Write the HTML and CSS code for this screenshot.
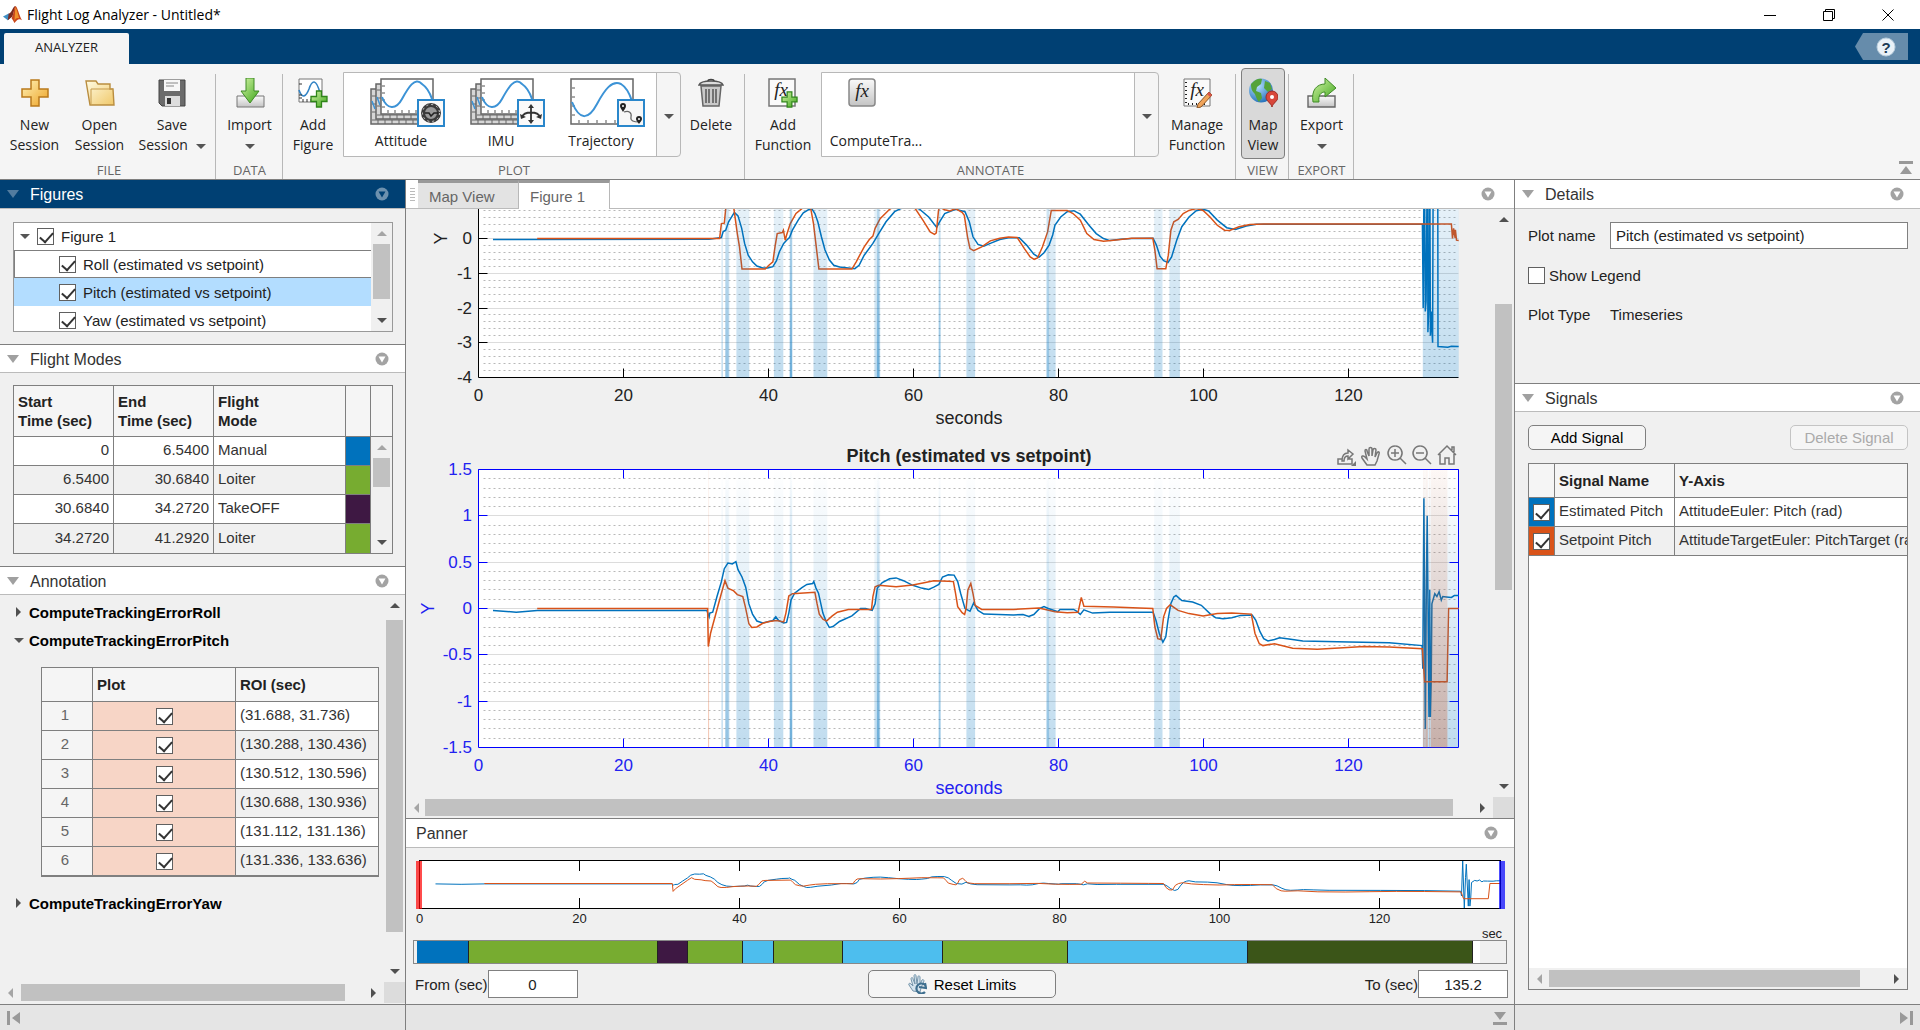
FILE: index.html
```html
<!DOCTYPE html>
<html lang="en">
<head>
    <meta charset="UTF-8">
    <meta name="viewport" content="width=device-width, initial-scale=1.0">
    <title>Flight Log Analyzer - Untitled*</title>
    <link rel="stylesheet" href="styles.css">
</head>
<body>
    <svg class="defs" width="0" height="0" aria-hidden="true">
        <defs>
            <linearGradient id="gold" x1="0" y1="0" x2="1" y2="1"><stop offset="0" stop-color="#fff3b8"/><stop offset="1" stop-color="#eda224"/></linearGradient>
            <linearGradient id="folder" x1="0" y1="0" x2="1" y2="1"><stop offset="0" stop-color="#fffbe2"/><stop offset="1" stop-color="#f0c869"/></linearGradient>
            <linearGradient id="green" x1="0" y1="0" x2="1" y2="1"><stop offset="0" stop-color="#d6f5a8"/><stop offset="1" stop-color="#3ca51a"/></linearGradient>
            <linearGradient id="steel" x1="0" y1="0" x2="0" y2="1"><stop offset="0" stop-color="#fafafa"/><stop offset="1" stop-color="#c4c4c4"/></linearGradient>
            <linearGradient id="blueBand" x1="0" y1="0" x2="0" y2="1"><stop offset="0" stop-color="#0072bd" stop-opacity="0"/><stop offset="1" stop-color="#0072bd" stop-opacity="0.25"/></linearGradient>
            <linearGradient id="redBand" x1="0" y1="0" x2="0" y2="1"><stop offset="0" stop-color="#d95319" stop-opacity="0.04"/><stop offset="1" stop-color="#d95319" stop-opacity="0.32"/></linearGradient>
            <radialGradient id="globe" cx="0.35" cy="0.3" r="0.8"><stop offset="0" stop-color="#b9e2ff"/><stop offset="1" stop-color="#1667b5"/></radialGradient>
            <symbol id="menu" viewBox="0 0 14 14"><circle cx="7" cy="7" r="6.500" fill="currentColor"/><path d="M3.500 4.500h7L7 10.500z"/></symbol>
            <symbol id="plus" viewBox="0 0 18 18"><path d="M6.500 1h5v5.500h5.500v5h-5.500v5.500h-5v-5.500H1v-5h5.500z" fill="url(#green)" stroke="#2f8519" stroke-width="1.300"/></symbol>
            <symbol id="stack" viewBox="0 0 75 49">
                <g fill="#d6d6d6" stroke="#666" stroke-width="1.500"><path d="M1 11h50v35H1z"/><path d="M6 6h50v35H6z"/></g>
                <path d="M2 42h48M7 37h48M8 42v4M15 42v4M22 42v4M29 42v4M36 42v4M43 42v4M13 37v4M20 37v4M27 37v4M34 37v4M41 37v4M2 18h4M2 26h4M2 34h4M7 12h4M7 20h4M7 28h4" stroke="#666" fill="none"/>
                <path d="M2 23l3 8M7 19l3 8" stroke="#3c93d6" stroke-width="1.500"/>
                <path d="M11 1h52v35H11z" fill="#fff" stroke="#666" stroke-width="1.500"/>
                <path d="M18 35v-3M25 35v-3M32 35v-3M39 35v-3M46 35v-3M12 8h3M12 15h3M12 22h3M12 29h3" stroke="#555"/>
                <path d="M12 19c5 13 14 13 20 2s13-23 20-15c6 4 8 9 10 15" fill="none" stroke="#3c93d6" stroke-width="2"/>
            </symbol>
        </defs>
    </svg>

    <header class="titlebar">
        <svg class="logo" viewBox="0 0 20 20"><path d="M0 12l6-3 3 3-4 4z" fill="#3f8fc4"/><path d="M6 9c3 0 4-7 7-8l-3 11-5 4z" fill="#7a2a20"/><path d="M13 1c2 0 4 10 7 15-3-2-5-1-8 3-1-2-2-4-3-5 2-3 2-10 4-13z" fill="#c9461b"/><path d="M13 2c2 3 3 9 4 12-2-1-4 0-5 3z" fill="#f0902b"/></svg>
        <h1>Flight Log Analyzer - Untitled*</h1>
        <div class="window-buttons">
            <button aria-label="Minimize"><svg viewBox="0 0 12 12"><path d="M0 6.500h12"/></svg></button>
            <button aria-label="Restore"><svg viewBox="0 0 12 12"><path d="M.5 2.500h9v9h-9zM2.500 2.500v-2h9v9h-2"/></svg></button>
            <button aria-label="Close"><svg viewBox="0 0 12 12"><path d="M.5.5l11 11M11.500.5l-11 11"/></svg></button>
        </div>
    </header>

    <nav class="tabbar">
        <a href="#" class="ribbon-tab">ANALYZER</a>
        <button class="help" aria-label="Help"><svg viewBox="0 0 20 20"><circle cx="10" cy="10" r="9" fill="#e9f1f7" stroke="#b8cddc"/><text x="10" y="15.500" text-anchor="middle">?</text></svg></button>
    </nav>

    <div class="ribbon">
        <section class="group group-file">
            <div class="tools">
                <button class="tool">
                    <svg viewBox="0 0 30 30"><path d="M11 2h8v9h9v8h-9v9h-8v-9H2v-8h9z" fill="url(#gold)" stroke="#b9791b" stroke-width="1.500"/></svg>
                    <span>New</span><span>Session</span>
                </button>
                <button class="tool">
                    <svg viewBox="0 0 30 30"><path d="M1 3h10l2 3h12v5h3l1 16H5z" fill="url(#folder)" stroke="#b98d3f" stroke-width="1.400"/><path d="M6 26V11h22" fill="none" stroke="#c69b4c"/></svg>
                    <span>Open</span><span>Session</span>
                </button>
                <button class="tool tool-wide">
                    <svg viewBox="0 0 30 30"><path d="M2 2h26v26H5l-3-3z" fill="#6b6b6b" stroke="#444"/><path d="M7 2h16v11H7z" fill="#f7f7f7"/><path d="M9 5h12M9 8h8" stroke="#888"/><path d="M8 18h15v10H8z" fill="#ddd"/><path d="M10 20h4v6h-4z" fill="#333"/></svg>
                    <span>Save</span><span>Session <i class="caret"></i></span>
                </button>
            </div>
            <h2>FILE</h2>
        </section>
        <section class="group group-data">
            <div class="tools">
                <button class="tool">
                    <svg viewBox="0 0 30 30"><path d="M2 18h27v11H2z" fill="url(#steel)" stroke="#777"/><path d="M11 0h8v13h5l-9 12-9-12h5z" fill="url(#green)" stroke="#3f8a26"/></svg>
                    <span>Import</span><span><i class="caret"></i></span>
                </button>
            </div>
            <h2>DATA</h2>
        </section>
        <section class="group group-plot">
            <div class="tools">
                <button class="tool">
                    <svg viewBox="0 0 30 30"><path d="M1 1h23v23H1z" fill="#fff" stroke="#777"/><path d="M1 12c3 9 7 7 10-1 3-9 7-11 11 4" fill="none" stroke="#3283c4" stroke-width="1.600"/><path d="M5 24v-3M9 24v-3M13 24v-3M1 6h3M1 17h3M1 20h3" stroke="#333"/><use href="#plus" x="12" y="12" width="18" height="18"/></svg>
                    <span>Add</span><span>Figure</span>
                </button>
                <div class="gallery">
                    <div class="gallery-items">
                        <button class="gallery-item">
                            <svg viewBox="0 0 75 49"><use href="#stack" width="75" height="49"/><path d="M48 22h26v26H48z" fill="#fafafa" stroke="#2a87cb" stroke-width="2"/><circle cx="61" cy="35" r="8" fill="#999" stroke="#3a3a3a" stroke-width="4"/><circle cx="61" cy="35" r="8.500" fill="none" stroke="#ccc" stroke-dasharray="2 3"/><path d="M55 35h4l2 3 3-3h4" fill="none" stroke="#222" stroke-width="1.500"/></svg>
                            <span>Attitude</span>
                        </button>
                        <button class="gallery-item">
                            <svg viewBox="0 0 75 49"><use href="#stack" width="75" height="49"/><path d="M48 22h26v26H48z" fill="#fafafa" stroke="#2a87cb" stroke-width="2"/><path d="M61 29v14M52 39c2-6 16-6 18 0" fill="none" stroke="#333" stroke-width="1.800"/><path d="M58 30l3-4 3 4zM58 42l3 4 3-4zM50 36l1 5 5-2zM72 36l-1 5-5-2z" fill="#333"/></svg>
                            <span>IMU</span>
                        </button>
                        <button class="gallery-item">
                            <svg viewBox="0 0 75 49"><path d="M1 1h62v45H1z" fill="#fff" stroke="#666" stroke-width="1.500"/><path d="M9 45v-3M18 45v-3M27 45v-3M36 45v-3M45 45v-3M2 10h3M2 19h3M2 28h3M2 37h3" stroke="#555"/><path d="M2 24c8 20 17 17 25 2S42 2 51 6c5 3 8 8 11 17" fill="none" stroke="#3c93d6" stroke-width="2"/><path d="M48 22h26v26H48z" fill="#f7f7f7" stroke="#2a87cb" stroke-width="2"/><path d="M54 34c5-2 8 1 7 5s3 5 8 5" fill="none" stroke="#666" stroke-width="1.200"/><path d="M53 34c-1-2-3-4-3-6a3 3 0 0 1 6 0c0 2-2 4-3 6zM69 46c-1-2-3-3-3-5a3 3 0 0 1 6 0c0 2-2 3-3 5z" fill="#222"/><circle cx="53" cy="28" r="1" fill="#fff"/><circle cx="69" cy="41" r="1" fill="#fff"/></svg>
                            <span>Trajectory</span>
                        </button>
                    </div>
                    <button class="gallery-more" aria-label="More plots"><i class="caret"></i></button>
                </div>
                <button class="tool">
                    <svg viewBox="0 0 30 30"><path d="M5 8h20l-2 20H7z" fill="#c9c9c9" stroke="#666" stroke-width="1.500"/><path d="M10 11v14M13 11v14M17 11v14M20 11v14" stroke="#555" stroke-width="1.500"/><path d="M3 7c1-3 6-4 12-4s11 1 12 4z" fill="#ddd" stroke="#555" stroke-width="1.500"/><path d="M12 3c0-2 6-2 6 0" fill="none" stroke="#444" stroke-width="1.500"/></svg>
                    <span>Delete</span>
                </button>
            </div>
            <h2>PLOT</h2>
        </section>
        <section class="group group-annotate">
            <div class="tools">
                <button class="tool tool-function">
                    <svg viewBox="0 0 30 30"><path d="M1 1h26v27H1z" fill="#fafafa" stroke="#777" stroke-width="1.500"/><text class="fx" x="13" y="18" text-anchor="middle">fx</text><use href="#plus" x="13" y="13" width="17" height="17"/></svg>
                    <span>Add</span><span>Function</span>
                </button>
                <div class="gallery">
                    <div class="gallery-items">
                        <button class="gallery-item gallery-function">
                            <svg viewBox="0 0 28 30"><rect x="1" y="1" width="26" height="27" rx="3" fill="url(#steel)" stroke="#888" stroke-width="1.500"/><text class="fx" x="14" y="19" text-anchor="middle">fx</text></svg>
                            <span>ComputeTra...</span>
                        </button>
                    </div>
                    <button class="gallery-more" aria-label="More functions"><i class="caret"></i></button>
                </div>
                <button class="tool tool-function">
                    <svg viewBox="0 0 30 30"><path d="M2 1h26v27H2z" fill="#fafafa" stroke="#777"/><path d="M4 4v22h22" fill="none" stroke="#222" stroke-width="2" stroke-dasharray="1 3"/><text class="fx" x="15" y="18" text-anchor="middle">fx</text><path d="M27 14l3 3-11 12-4 1 1-4z" fill="#f0a45a" stroke="#8a5526"/><path d="M27 14l3 3-2 2-3-3z" fill="#d9534a"/></svg>
                    <span>Manage</span><span>Function</span>
                </button>
            </div>
            <h2>ANNOTATE</h2>
        </section>
        <section class="group group-view">
            <div class="tools">
                <button class="tool tool-pressed" aria-pressed="true">
                    <svg viewBox="0 0 30 30"><circle cx="13" cy="12.500" r="12" fill="url(#globe)"/><path d="M3 6c4-5 8-6 11-5l-1 5-4 3-1 4 5 2 1 5-3 4c-3-3-3-7-5-9S3 11 3 6zM17 3l5 2 2 6-4 3-4-4z" fill="#54a33a"/><path d="M24 29c-1-4-6-6-6-10a6 6 0 0 1 12 0c0 4-5 6-6 10z" fill="#d8473b" stroke="#9c2a22"/><circle cx="24" cy="19" r="2" fill="#fff"/></svg>
                    <span>Map</span><span>View</span>
                </button>
            </div>
            <h2>VIEW</h2>
        </section>
        <section class="group group-export">
            <div class="tools">
                <button class="tool">
                    <svg viewBox="0 0 30 30"><path d="M1 18h27v11H1z" fill="url(#steel)" stroke="#666" stroke-width="1.400"/><path d="M6 24C4 12 10 6 18 6V0l11 10-11 9v-5c-4 0-7 3-6 10z" fill="url(#green)" stroke="#3f8a26"/></svg>
                    <span>Export</span><span><i class="caret"></i></span>
                </button>
            </div>
            <h2>EXPORT</h2>
        </section>
        <button class="collapse" aria-label="Collapse toolstrip"><svg viewBox="0 0 14 14"><path d="M0 0h14v3H0zM7 5l6 8H1z"/></svg></button>
    </div>

    <main class="workspace">
        <aside class="column">
            <section class="panel panel-figures">
                <div class="panel-head active"><i class="fold"></i><h3>Figures</h3><svg class="menu"><use href="#menu"/></svg></div>
                <div class="panel-body">
                    <div class="tree-box">
                        <ul class="tree">
                            <li class="root"><i class="caret"></i><label><input type="checkbox" checked>Figure 1</label></li>
                            <li class="outlined"><label><input type="checkbox" checked>Roll (estimated vs setpoint)</label></li>
                            <li class="selected"><label><input type="checkbox" checked>Pitch (estimated vs setpoint)</label></li>
                            <li><label><input type="checkbox" checked>Yaw (estimated vs setpoint)</label></li>
                        </ul>
                        <div class="vbar tree-bar"><i class="up off"></i><div class="thumb"></div><i class="down"></i></div>
                    </div>
                </div>
            </section>

            <section class="panel panel-modes">
                <div class="panel-head"><i class="fold"></i><h3>Flight Modes</h3><svg class="menu"><use href="#menu"/></svg></div>
                <div class="panel-body">
                    <div class="modes-box">
                        <table class="modes">
                            <thead><tr><th>Start<br>Time (sec)</th><th>End<br>Time (sec)</th><th>Flight<br>Mode</th><th class="swatch"></th></tr></thead>
                            <tbody>
                                <tr><td class="num">0</td><td class="num">6.5400</td><td>Manual</td><td class="manual"></td></tr>
                                <tr><td class="num">6.5400</td><td class="num">30.6840</td><td>Loiter</td><td class="loiter"></td></tr>
                                <tr><td class="num">30.6840</td><td class="num">34.2720</td><td>TakeOFF</td><td class="takeoff"></td></tr>
                                <tr><td class="num">34.2720</td><td class="num">41.2920</td><td>Loiter</td><td class="loiter"></td></tr>
                            </tbody>
                        </table>
                        <div class="modes-side">
                            <div class="vbar modes-bar"><i class="up off"></i><div class="thumb"></div><i class="down"></i></div>
                        </div>
                    </div>
                </div>
            </section>

            <section class="panel panel-annotation">
                <div class="panel-head"><i class="fold"></i><h3>Annotation</h3><svg class="menu"><use href="#menu"/></svg></div>
                <div class="annotation-body">
                    <div class="annotation-list">
                        <h4><i class="arrow-right"></i>ComputeTrackingErrorRoll</h4>
                        <h4><i class="caret"></i>ComputeTrackingErrorPitch</h4>
                        <table class="roi">
                            <thead><tr><th class="index"></th><th>Plot</th><th>ROI (sec)</th></tr></thead>
                            <tbody>
                                <tr><td class="index">1</td><td class="flag"><input type="checkbox" aria-label="Plot ROI 1" checked></td><td>(31.688, 31.736)</td></tr>
                                <tr><td class="index">2</td><td class="flag"><input type="checkbox" aria-label="Plot ROI 2" checked></td><td>(130.288, 130.436)</td></tr>
                                <tr><td class="index">3</td><td class="flag"><input type="checkbox" aria-label="Plot ROI 3" checked></td><td>(130.512, 130.596)</td></tr>
                                <tr><td class="index">4</td><td class="flag"><input type="checkbox" aria-label="Plot ROI 4" checked></td><td>(130.688, 130.936)</td></tr>
                                <tr><td class="index">5</td><td class="flag"><input type="checkbox" aria-label="Plot ROI 5" checked></td><td>(131.112, 131.136)</td></tr>
                                <tr><td class="index">6</td><td class="flag"><input type="checkbox" aria-label="Plot ROI 6" checked></td><td>(131.336, 133.636)</td></tr>
                            </tbody>
                        </table>
                        <h4><i class="arrow-right"></i>ComputeTrackingErrorYaw</h4>
                    </div>
                    <div class="vbar annotation-bar"><i class="up"></i><div class="thumb"></div><i class="down"></i></div>
                    <div class="hbar annotation-hbar"><i class="left off"></i><div class="thumb"></div><i class="right"></i></div>
                    <div class="corner"></div>
                </div>
            </section>
            <footer class="status"><svg viewBox="0 0 14 14"><path d="M0 0h3v14H0zM13 1v12L5 7z"/></svg></footer>
        </aside>

        <section class="column">
            <div class="doc-tabs">
                <i class="grip"></i>
                <a href="#">Map View</a>
                <a href="#" class="current">Figure 1</a>
                <svg class="menu"><use href="#menu"/></svg>
            </div>
            <div class="figure-area">
                <div class="figure-canvas">
                    <svg id="figure" viewBox="0 0 1087 588" preserveAspectRatio="xMidYMin meet"></svg>
                </div>
                <div class="vbar figure-bar"><i class="up"></i><div class="thumb"></div><i class="down"></i></div>
                <div class="hbar figure-hbar"><i class="left off"></i><div class="thumb"></div><i class="right"></i></div>
                <div class="corner"></div>
            </div>
            <div class="panel-head panner-head"><h3>Panner</h3><svg class="menu"><use href="#menu"/></svg></div>
            <div class="panner-body">
                <svg id="panner" viewBox="0 0 1108 92"></svg>
                <div class="mode-strip">
                    <i class="manual" style="flex-grow:51"></i><i class="loiter" style="flex-grow:190"></i><i class="takeoff" style="flex-grow:29"></i><i class="loiter" style="flex-grow:55"></i><i class="hold" style="flex-grow:30"></i><i class="loiter" style="flex-grow:69"></i><i class="hold" style="flex-grow:100"></i><i class="loiter" style="flex-grow:125"></i><i class="hold" style="flex-grow:181"></i><i class="mission" style="flex-grow:226"></i><i class="rest" style="flex-grow:7"></i><i class="outside" style="flex-grow:26"></i>
                </div>
                <div class="limits">
                    <div class="limit"><label for="from">From (sec)</label><input type="text" id="from" value="0"></div>
                    <button class="reset">
                        <svg viewBox="0 0 20 20"><path d="M6 17L2 11c-1-2 1-2 2-1l2 2-2-7c0-2 2-2 2 0l2 5-1-8c0-2 2-2 2 0l1 8 1-7c0-2 2-1 2 0v7l2-4c1-1 2 0 2 1l-3 7-1 4z" fill="#d5e4ee" stroke="#7494aa"/><path d="M18 11a5 5 0 1 0 0 7M12 13l7 1-1-5" fill="none" stroke="#3f6f8f" stroke-width="2.200"/></svg>
                        Reset Limits
                    </button>
                    <div class="limit"><label for="to">To (sec)</label><input type="text" id="to" value="135.2"></div>
                </div>
            </div>
            <footer class="status status-end"><svg viewBox="0 0 14 14"><path d="M0 11h14v3H0zM1 1h12L7 9z"/></svg></footer>
        </section>

        <aside class="column">
            <section class="panel panel-details">
                <div class="panel-head"><i class="fold"></i><h3>Details</h3><svg class="menu"><use href="#menu"/></svg></div>
                <div class="panel-body details">
                    <label for="plot-name">Plot name</label><input type="text" id="plot-name" value="Pitch (estimated vs setpoint)">
                    <label class="legend"><input type="checkbox">Show Legend</label>
                    <span>Plot Type</span><span>Timeseries</span>
                </div>
            </section>
            <section class="panel panel-signals">
                <div class="panel-head"><i class="fold"></i><h3>Signals</h3><svg class="menu"><use href="#menu"/></svg></div>
                <div class="panel-body signals-body">
                    <div class="signal-buttons"><button>Add Signal</button><button disabled>Delete Signal</button></div>
                    <div class="signals-box">
                        <table class="signals">
                            <thead><tr><th class="pick"></th><th class="name">Signal Name</th><th>Y-Axis</th></tr></thead>
                            <tbody>
                                <tr><td class="pick estimated-color"><input type="checkbox" aria-label="Estimated Pitch" checked></td><td>Estimated Pitch</td><td>AttitudeEuler: Pitch (rad)</td></tr>
                                <tr><td class="pick setpoint-color"><input type="checkbox" aria-label="Setpoint Pitch" checked></td><td>Setpoint Pitch</td><td>AttitudeTargetEuler: PitchTarget (rad)</td></tr>
                            </tbody>
                        </table>
                        <div class="hbar signals-hbar"><i class="left off"></i><div class="thumb"></div><i class="right"></i></div>
                    </div>
                </div>
            </section>
            <footer class="status status-end"><svg viewBox="0 0 14 14"><path d="M11 0h3v14h-3zM1 1v12l8-6z"/></svg></footer>
        </aside>
    </main>
    <script src="plots.js"></script>
</body>
</html>
```
FILE: plots.js
```js
// time (sec), value (rad)
const rollEstimated = [2,-.03, 31.8,-.02, 33.5,.03, 33.75,.2, 34.1,.24, 34.5,.48, 35.3,.75, 35.8,.65, 36.3,.29, 36.7,-.14, 37.2,-.48, 37.8,-.67, 38.4,-.79, 39.2,-.85, 39.9,-.85, 40.6,-.81, 41.1,-.64, 41.5,-.38, 42.1,-.14, 42.5,-.05, 42.9,.03, 43.3,.24, 44.1,.53, 44.8,.74, 45.6,.84, 46,.85, 46.4,.72, 46.8,.48, 47.3,.05, 47.8,-.33, 48.4,-.62, 49,-.77, 49.8,-.82, 51,-.85, 51.9,-.87, 52.5,-.77, 53.2,-.48, 54.4,-.14, 55.2,.14, 56.2,.48, 57.4,.77, 58.1,.85, 59.4,.95, 60.8,.85, 62.1,.62, 63.2,.32, 63.6,.48, 64.3,.72, 65.8,.84, 67.1,.77, 67.7,.48, 68.2,.05, 68.9,-.17, 69.7,-.22, 70.6,-.14, 71.9,-.03, 73.1,.02, 74.6,.02, 75.6,-.19, 76.6,-.45, 77.3,-.54, 78,-.41, 78.7,-.19, 79.2,.1, 79.5,.38, 80.3,.62, 81.2,.77, 82.1,.8, 83,.7, 84.2,.38, 85.2,.14, 86.2,0, 87.1,-.06, 88.6,-.02, 90.1,0, 93.05,.01, 93.5,-.19, 94,-.51, 94.5,-.64, 95.1,-.69, 95.6,-.53, 96.3,-.05, 97,.34, 98,.62, 99,.8, 100,.84, 100.7,.79, 101.9,.53, 103.2,.31, 104.4,.26, 105.9,.36, 107.3,.41, 130.2,.41, 130.3,-2, 130.45,3, 130.6,-2.1, 130.7,-1.8, 130.9,3, 130.95,-2.7, 131.1,-1.9, 131.2,3, 131.3,-2.8, 131.4,-2.1, 131.5,-2.6, 131.6,-3, 131.7,3, 132.3,3, 132.35,-3.11, 133.7,-3.13, 134.2,-3.1, 135.2,-3.11];
const rollSetpoint = [8.1,0, 33.25,0, 33.5,.43, 33.9,.44, 34.1,.85, 34.2,1, 35.2,.9, 35.7,.14, 36,-.24, 36.35,-.88, 39.55,-.88, 40.05,-.77, 40.6,-.67, 40.9,-.24, 41.2,.14, 41.9,.17, 42.05,.24, 42.3,-.05, 42.5,.1, 43,.43, 43.8,.72, 44.6,.86, 45.5,1, 45.8,.9, 46.2,.43, 46.95,-.88, 51.5,-.88, 52.1,-.67, 53.2,-.24, 53.9,-.03, 54.4,.07, 54.7,.29, 55.4,.57, 56.7,.84, 58,1, 59.5,1, 60.3,.84, 61.3,.53, 62.3,.19, 62.9,.12, 63.15,.16, 63.45,.81, 63.6,.9, 64.3,.83, 65,.79, 65.8,.86, 66.7,.75, 67,.67, 67.45,.05, 67.8,-.29, 68.3,-.35, 69.4,-.24, 70.6,-.07, 71.9,.01, 73.1,.04, 74.3,.03, 75.3,-.29, 76.1,-.53, 76.65,-.6, 77.1,-.56, 77.8,-.24, 78.5,.19, 79,.81, 81.2,.81, 82,.72, 83,.53, 83.9,.14, 84.9,-.03, 86.2,-.08, 87.6,-.05, 90.1,.01, 93,.01, 93.3,-.34, 93.6,-.87, 94.8,-.87, 95.15,-.48, 95.5,.24, 95.9,.48, 96.5,.55, 97.2,.72, 98,.81, 99,.86, 99.95,.81, 100.9,.62, 101.9,.38, 102.9,.24, 103.6,.23, 104.9,.34, 106.4,.4, 108.3,.42, 134.2,.42, 134.35,0, 134.5,.29, 134.7,.02, 134.75,.25, 134.9,-.05, 135.2,-.06];
const pitchEstimated = [2,-.02, 5.2,-.04, 8.1,-.02, 31.5,-.02, 31.8,-.09, 31.9,-.05, 32.3,-.04, 32.9,.13, 33.5,.29, 33.9,.43, 34.4,.49, 35,.48, 35.5,.505, 35.8,.42, 36.35,.34, 36.85,.23, 37.3,.05, 37.8,-.06, 38.4,-.135, 39.2,-.155, 40.6,-.13, 41,-.09, 41.4,-.13, 42.1,-.155, 42.5,-.15, 42.8,-.05, 43.1,.09, 43.6,.165, 44.6,.225, 45.3,.26, 46.1,.27, 46.25,.29, 46.55,.22, 46.9,.165, 47.5,-.05, 48,-.15, 48.4,-.205, 48.9,-.195, 49.8,-.14, 51.5,-.08, 52.7,0, 53.4,0, 54.3,-.02, 54.7,.05, 55,.22, 55.7,.28, 56.7,.32, 57.6,.33, 58.6,.3, 59.9,.25, 61.1,.22, 62.1,.205, 62.8,.23, 63.5,.26, 64,.34, 64.8,.365, 65.6,.36, 66.1,.29, 66.5,.165, 67.1,0, 67.8,-.03, 68.3,.06, 68.9,-.02, 69.7,-.06, 73.8,-.07, 75.1,-.065, 75.9,-.085, 76.6,-.065, 77.4,0, 78,.02, 78.6,0, 79.9,-.035, 80.2,-.01, 82.1,-.01, 82.6,-.035, 83,-.065, 83.5,-.015, 84.7,-.05, 87.1,-.04, 93.05,-.04, 93.45,-.13, 93.9,-.27, 94.4,-.365, 94.8,-.305, 95.1,-.125, 95.5,.055, 95.9,.125, 96.2,.14, 97,.085, 98.5,.07, 99.7,.035, 100.9,-.055, 101.7,-.1, 102.7,-.11, 103.9,-.1, 105.1,-.075, 106.7,-.07, 107.2,-.125, 107.8,-.25, 108.3,-.325, 108.9,-.35, 109.8,-.335, 110.5,-.315, 111.8,-.33, 113.7,-.35, 120.1,-.36, 125.6,-.37, 130.15,-.4, 130.25,-.65, 130.4,1.19, 130.6,-1.3, 130.75,.3, 130.85,1, 131.1,-1.17, 131.2,.2, 131.3,-1.17, 131.4,-.8, 131.5,.05, 131.9,.16, 132.2,.13, 132.5,.18, 132.8,.09, 133,.13, 133.5,.125, 134.2,.12, 134.6,.14, 135.2,.14];
const pitchSetpoint = [8.1,0, 31.6,0, 31.7,-.41, 32,-.27, 33.5,.165, 34,.3, 34.4,.22, 35.2,.19, 35.7,.15, 36.45,.13, 36.8,.02, 37.3,-.165, 37.7,-.205, 38.4,-.2, 39.2,-.16, 40.1,-.14, 41.1,-.13, 42.1,-.145, 42.4,-.05, 42.8,.135, 43.3,.16, 46.4,.175, 46.7,.05, 47,-.06, 47.5,-.115, 48,-.135, 48.8,-.08, 49.5,-.04, 51,-.01, 54.2,-.01, 54.4,.13, 54.7,.235, 55.2,.25, 57.6,.235, 59.9,.255, 61.3,.275, 62.8,.3, 64.8,.295, 65.5,.29, 65.8,.165, 66.1,.02, 66.7,-.045, 67.05,-.065, 67.25,0, 67.5,.2, 67.9,.27, 68.2,.16, 68.5,.035, 69.4,-.01, 73.8,-.01, 77.3,.005, 79.5,-.035, 81.2,-.045, 82.7,-.04, 83.15,.12, 83.5,.025, 87.6,.015, 91.1,.005, 93,0, 93.3,-.2, 93.7,-.325, 94.1,-.335, 94.5,-.09, 94.9,0, 95.4,.04, 96.5,-.02, 98,-.055, 99.95,-.08, 101.9,-.055, 103.9,-.05, 106.6,-.06, 107.1,-.27, 107.7,-.38, 108.2,-.4, 109.8,-.38, 112.3,-.43, 115.7,-.44, 118.7,-.425, 122.1,-.41, 125.6,-.415, 130.2,-.435, 130.5,-.79, 133.6,-.79, 133.8,0, 135.2,0];

// start, end of each region of interest; narrow ones overlap and look darker
const rollErrors = [[33.5,33.7], [34,34.6], [34.1,34.5], [35.57,37.35], [40.75,42.05], [42.9,43.3], [42.95,43.25], [42.95,43.25], [46.2,48.1], [54.6,55.4], [54.95,55.3], [54.95,55.3], [63.45,63.75], [63.5,63.7], [67.3,68.5], [78.3,79.6], [78.4,78.7], [93.2,94.35], [95.3,96.75], [130.25,135.2]];
const pitchErrors = [[31.65,31.8], [130.29,130.45], [130.5,130.65], [130.69,130.94], [131.1,131.2], [131.34,133.64]];

const line = (x1, y1, x2, y2, cls) => `<line x1="${x1}" y1="${y1}" x2="${x2}" y2="${y2}" class="${cls}"/>`;
const text = (x, y, cls, s) => `<text x="${x}" y="${y}" class="${cls}">${s}</text>`;

function curve(data, x, y, cls) {
    let points = '';
    for (let i = 0; i < data.length; i += 2) points += x(data[i]).toFixed(1) + ',' + y(data[i + 1]).toFixed(1) + ' ';
    return `<polyline points="${points}" class="${cls}"/>`;
}

function bands(list, x, top, height, fill) {
    return list.map(b => `<rect x="${x(b[0]).toFixed(1)}" y="${top}" width="${((b[1] - b[0]) * 7.25).toFixed(1)}" height="${height}" fill="url(#${fill})"/>`).join('');
}

function axes(o) {
    const left = 72.5, right = 1052.5, bottom = o.top + 278;
    const x = t => left + t * 7.25;
    const y = v => o.top + (o.max - v) * 278 / (2 * o.max);
    let s = `<g class="${o.cls}"><rect x="${left}" y="${o.top}" width="${right - left}" height="278" class="plot-bg"/>`;
    const n = Math.round(2 * o.max / o.minor);
    for (let i = 1; i < n; i++) {
        const py = Math.floor(y(o.max - i * o.minor)) + 0.5;
        if (py < 0) continue;
        if (i % 5 === 0) s += line(left, py, right, py, 'grid');
        else s += line(left + 5, py, right, py, 'grid-minor');
    }
    s += `<path class="axis" d="${o.box ? `M${left} ${o.top}H${right}V${bottom}H${left}Z` : `M${left} 0V${bottom}H${right}`}"/>`;
    for (let t = 20; t < 135; t += 20) {
        const px = Math.floor(x(t)) + 0.5;
        s += line(px, bottom, px, bottom - 9, 'axis');
        if (o.box) s += line(px, o.top, px, o.top + 9, 'axis');
    }
    for (let i = 0; i <= n; i += 5) {
        const v = o.max - i * o.minor, py = Math.floor(y(v)) + 0.5;
        if (py < 10) continue; // scrolled out of view
        if (i < n) {
            s += line(left, py, left + 9, py, 'axis');
            if (o.box) s += line(right, py, right - 9, py, 'axis');
        }
        s += text(66, Math.floor(y(v)) + 6, 'tick-y', +v.toFixed(1));
    }
    for (let t = 0; t < 135; t += 20) s += text(x(t), bottom + 23, 'tick-x', t);
    s += text(563, bottom + 46, 'label', 'seconds');
    s += `<text transform="translate(${o.labelX} ${o.top + 139}) rotate(-90)" class="label">Y</text>`;
    s += curve(o.estimated, x, y, 'estimated') + curve(o.setpoint, x, y, 'setpoint');
    s += bands(rollErrors, x, o.top, 278, 'blueBand');
    if (o.box) s += bands(pitchErrors, x, o.top, 278, 'redBand');
    return s + '</g>';
}

const tools = `<g class="axes-tools">
    <path transform="translate(931 238)" d="M5 12H1v5h14v-5h-4M5 14c0-6 2-8 6-8V3l5 4-5 5V9c-3 0-4 2-4 5z"/>
    <path transform="translate(931 238)" class="solid" d="M19 19v-5l-5 5z"/>
    <path transform="translate(955 237)" d="M6 19L1 12c-1-2 1-3 3-1l2 2-2-8c0-2 2-2 2 0l2 5V3c0-2 3-2 3 0v7l1-6c0-2 3-2 3 0l-1 7 2-4c1-2 3-1 2 1l-2 7-2 4z"/>
    <path transform="translate(981 236)" d="M8 1a7 7 0 1 0 .1 0M13 13l6 6M4 8h8M8 4v8"/>
    <path transform="translate(1006 236)" d="M8 1a7 7 0 1 0 .1 0M13 13l6 6M4 8h8"/>
    <path transform="translate(1031 236)" d="M1 10L10 1l9 9M3 9v10h5v-6h4v6h5V9M15 5V2h2v5"/>
</g>`;

document.getElementById('figure').innerHTML =
    axes({ top: -109.5, max: 4, minor: 0.2, cls: 'axes-dark', labelX: 41, estimated: rollEstimated, setpoint: rollSetpoint }) +
    axes({ top: 260.5, max: 1.5, minor: 0.1, cls: 'axes-blue', box: true, labelX: 28, estimated: pitchEstimated, setpoint: pitchSetpoint }) +
    text(563, 253, 'plot-title', 'Pitch (estimated vs setpoint)') + tools;

// overview strip under the figure
const px = t => 13.5 + t * 8, py = v => 35.5 - v * 19.3;
let strip = '<rect x="13.500" y="12.500" width="1081" height="48" class="plot-bg"/>';
strip += curve(pitchEstimated, px, py, 'estimated thin') + curve(pitchSetpoint, px, py, 'setpoint thin');
strip += '<path class="axis" d="M13.500 12.500H1095M13.500 60.500H1095M13.500 12v49M1094.500 12v49"/>';
for (let t = 0; t < 135; t += 20) {
    if (t) strip += line(px(t), 13, px(t), 23, 'axis') + line(px(t), 50, px(t), 60, 'axis');
    strip += text(px(t), 75, 'small', t);
}
strip += text(1086, 90, 'small', 'sec');
strip += '<rect x="10" y="13" width="6" height="48" fill="#f00" fill-opacity="0.7"/><rect x="1093" y="13" width="6" height="48" fill="#00f" fill-opacity="0.7"/>';
document.getElementById('panner').innerHTML = strip;
```
FILE: styles.css
```css
* {
    box-sizing: border-box;
}
body {
    margin: 0;
    height: 100vh;
    display: flex;
    flex-direction: column;
    font-family: "Liberation Sans", Arial, sans-serif;
    font-size: 15px;
    color: #222;
    background: #f0f0f0;
    overflow: hidden;
}
h1, h2, h3, h4, ul {
    margin: 0;
    padding: 0;
    font-weight: normal;
}
button {
    font: inherit;
    color: inherit;
    background: none;
    border: none;
    padding: 0;
}
a {
    color: inherit;
    text-decoration: none;
}
.defs {
    position: absolute;
}

/* title bar */
.titlebar {
    display: flex;
    align-items: center;
    height: 29px;
    flex: none;
    padding: 0 26px 0 3px;
    background: #fff;
    color: #000;
    font-family: "Open Sans", "Noto Sans", sans-serif;
}
.logo {
    width: 19px;
    height: 19px;
    margin-right: 5px;
}
h1 {
    font-size: 14px;
    flex: 1;
}
.window-buttons {
    display: flex;
    gap: 47px;
}
.window-buttons svg {
    display: block;
    width: 12px;
    height: 12px;
    fill: none;
    stroke: #000;
}
.tabbar {
    display: flex;
    justify-content: space-between;
    height: 35px;
    flex: none;
    padding: 4px 12px 0 4px;
    background: #004073;
}
.ribbon-tab {
    width: 125px;
    line-height: 28px;
    text-align: center;
    font-family: "Open Sans", "Noto Sans", sans-serif;
    font-size: 13px;
    background: #f5f5f5;
    border-radius: 2px 2px 0 0;
}
.help {
    width: 53px;
    height: 27px;
    padding-left: 8px;
    background: #668cab;
    clip-path: polygon(8px 0, 100% 0, 100% 100%, 8px 100%, 0 50%);
}
.help svg {
    display: block;
    width: 20px;
    height: 20px;
    margin: auto;
}
.help text {
    font-size: 15px;
    font-weight: bold;
    fill: #1d3a54;
}

/* toolstrip */
.ribbon {
    display: flex;
    height: 116px;
    flex: none;
    background: #f5f5f5;
    border-bottom: 1px solid #7f7f7f;
    font-family: "Open Sans", "Noto Sans", sans-serif;
    font-size: 14px;
}
.group {
    display: flex;
    flex-direction: column;
    justify-content: space-between;
    background: linear-gradient(#b8b8b8, #b8b8b8) right bottom / 1px 105px no-repeat;
}
.group-file { width: 216px; padding-left: 2px; }
.group-data { width: 67px; }
.group-plot { width: 462px; }
.group-annotate { width: 491px; }
.group-view { width: 53px; }
.group-export { width: 65px; }
.group h2 {
    font-size: 13px;
    line-height: 17px;
    text-align: center;
    color: #666;
}
.tools {
    display: flex;
    height: 98px;
}
.tool {
    display: flex;
    flex-direction: column;
    align-items: center;
    width: 65px;
    padding-top: 14px;
    line-height: 20px;
}
.tool > svg {
    width: 30px;
    height: 30px;
    margin-bottom: 7px;
    flex: none;
}
.tool-wide { width: 80px; }
.group-data .tool, .group-export .tool { width: 100%; }
.group-plot .tool { width: 60px; }
.tool-function { width: 76px; }
.tool-pressed {
    width: 44px;
    height: 91px;
    margin: 4px 0 0 5px;
    padding-top: 9px;
    background: #d9d9d9;
    border: 1px solid #7f7f7f;
    border-radius: 4px;
}
.fx {
    font: italic 19px "Liberation Serif", serif;
}
.caret {
    display: inline-block;
    border: 5px solid transparent;
    border-top-color: #555;
    border-bottom: none;
    vertical-align: middle;
}
.tool-wide .caret {
    margin-left: 4px;
}
.gallery {
    display: flex;
    width: 338px;
    height: 85px;
    margin-top: 8px;
    border: 1px solid #b8b8b8;
    border-radius: 0 4px 4px 0;
}
.gallery-items {
    display: flex;
    flex: 1;
    padding-left: 7px;
    background: #fff;
}
.gallery-item {
    display: flex;
    flex-direction: column;
    align-items: center;
    width: 100px;
    padding-top: 5px;
}
.gallery-item svg {
    width: 75px;
    height: 49px;
    margin: 0 0 4px 12px;
}
.gallery-item span {
    line-height: 20px;
}
.gallery-function {
    width: 94px;
}
.gallery-function svg {
    width: 28px;
    height: 30px;
    margin: 0 0 23px 19px;
    align-self: flex-start;
}
.gallery-more {
    width: 24px;
    border-left: 1px solid #b8b8b8;
}
.collapse {
    margin-left: auto;
    align-self: flex-end;
    padding: 0 7px 4px;
}
.collapse svg, .status svg {
    display: block;
    width: 14px;
    height: 14px;
    fill: #999;
}

/* work area */
.workspace {
    display: grid;
    grid-template-columns: 406px minmax(0, 1fr) 405px;
    flex: 1;
    min-height: 0;
}
.column {
    display: flex;
    flex-direction: column;
    min-width: 0;
    min-height: 0;
    border-right: 1px solid #7f7f7f;
}
.column:last-child {
    border-right: none;
}
.panel + .panel {
    border-top: 1px solid #7f7f7f;
}
.panel-head {
    display: flex;
    align-items: center;
    height: 29px;
    flex: none;
    padding: 0 16px 0 7px;
    background: #fff;
    border-bottom: 1px solid #bbb;
    color: #333;
}
.panel + .panel .panel-head {
    height: 28px;
}
.panel-head h3 {
    flex: 1;
    padding-top: 2px;
    font-size: 16px;
    line-height: 20px;
}
.panel-head.active {
    background: #004073;
    color: #fff;
}
.fold {
    border: 6px solid transparent;
    border-top: 8px solid #a0a0a0;
    border-bottom: none;
    margin-right: 11px;
}
.menu {
    width: 14px;
    height: 14px;
    color: #a3a3a3;
    fill: #fff;
}
.active .menu {
    color: #6d91ae;
    fill: #004073;
}
.active .fold {
    border-top-color: #527c9f;
}
.panel-body {
    padding: 13px 12px 12px 13px;
}
.panel-modes .panel-body {
    padding-top: 12px;
}
input[type="checkbox"] {
    appearance: none;
    width: 17px;
    height: 17px;
    margin: 0;
    flex: none;
    background: #fff;
    border: 1px solid #606060;
}
input[type="checkbox"]:checked::after {
    content: "";
    display: block;
    width: 11px;
    height: 6px;
    margin: 3px 2px;
    border: 2px solid #333;
    border-top: none;
    border-right: none;
    transform: rotate(-48deg);
}

/* scroll bars */
.vbar, .hbar {
    display: flex;
    align-items: center;
    background: #f0f0f0;
}
.vbar {
    flex-direction: column;
    width: 21px;
    flex: none;
    padding: 8px 0;
}
.hbar {
    height: 21px;
    padding: 0 8px;
}
.thumb {
    background: #c1c1c1;
}
.vbar .thumb { width: 17px; }
.hbar .thumb { height: 17px; }
.up, .down, .left, .right, .arrow-right {
    display: inline-block;
    flex: none;
    border: 5px solid transparent;
}
.up { border-bottom-color: #505050; border-top: none; }
.down { border-top-color: #505050; border-bottom: none; margin-top: auto; }
.left { border-right-color: #505050; border-left: none; }
.right, .arrow-right { border-left-color: #505050; border-right: none; }
.right { margin-left: auto; }
.up.off { border-bottom-color: #a5a5a5; }
.left.off { border-right-color: #a5a5a5; }
.corner {
    background: #dcdcdc;
}

/* figures */
.tree-box {
    display: flex;
    height: 110px;
    background: #fff;
    border: 1px solid #999;
    overflow: hidden;
}
.tree {
    flex: 1;
    list-style: none;
}
.tree li {
    display: flex;
    align-items: center;
    height: 28px;
    padding-left: 45px;
}
.tree label {
    display: flex;
    align-items: center;
    gap: 7px;
}
.tree .root {
    height: 27px;
    padding-left: 6px;
}
.root .caret {
    margin-right: 7px;
}
.tree .outlined {
    padding-left: 44px;
    border: 1px solid #7f7f7f;
    border-right: none;
}
.selected {
    background: #b3ddff;
}
.tree-bar .thumb {
    height: 60%;
    margin-top: 8px;
}

/* tables */
table {
    border-collapse: separate;
    border-spacing: 0;
    table-layout: fixed;
}
th, td {
    height: 29px;
    padding: 0 4px 3px 4px;
    text-align: left;
    border: 0 solid #7f7f7f;
    border-width: 0 1px 1px 0;
    white-space: nowrap;
}
th {
    padding-bottom: 0;
    background: #f5f5f5;
}
td {
    background: #fff;
    color: #333;
}
tr:nth-child(even) td {
    background: #f0f0f0;
}
tr:nth-child(n) td.manual, i.manual { background: #0072bd; }
tr:nth-child(n) td.loiter, i.loiter { background: #77ac30; }
tr:nth-child(n) td.takeoff, i.takeoff { background: #3e1843; }
i.hold { background: #4dbeee; }
i.mission { background: #3b5518; }
i.rest { background: #fff; }
.num {
    text-align: right;
}
.modes-box {
    display: flex;
    border: 1px solid #7f7f7f;
}
.modes {
    flex: 1;
}
.modes th {
    height: 51px;
    line-height: 19px;
    width: 100px;
}
.modes th:nth-child(3) { width: auto; }
.modes .swatch { width: 25px; }
.modes tbody tr:last-child td { border-bottom: none; }
.modes-side {
    display: flex;
    flex-direction: column;
    width: 21px;
    padding-top: 50px;
    background: #f5f5f5;
}
.modes-bar {
    flex: 1;
    border-top: 1px solid #7f7f7f;
}
.modes-bar .thumb {
    height: 29px;
    margin-top: 8px;
}

/* annotation */
.panel-annotation {
    display: flex;
    flex-direction: column;
    flex: 1;
    min-height: 0;
}
.annotation-body {
    display: grid;
    grid-template: minmax(0, 1fr) 21px / minmax(0, 1fr) 21px;
    flex: 1;
    min-height: 0;
    padding-bottom: 1px;
}
.annotation-list {
    overflow: hidden;
    padding: 3px 4px 0 14px;
}
.annotation-list h4 {
    display: flex;
    align-items: center;
    gap: 5px;
    height: 28px;
    font-weight: bold;
    color: #000;
}
.arrow-right {
    margin: 0 3px 0 2px;
}
.roi {
    width: 338px;
    margin: 13px 0 12px 27px;
    border: 1px solid #7f7f7f;
    border-right: none;
}
.roi th {
    height: 34px;
}
.roi .index {
    width: 51px;
    padding-left: 0;
    text-align: center;
    color: #666;
    background: #f5f5f5;
}
.roi .flag {
    padding: 0;
    background: #f7d5c6;
}
.flag input {
    display: block;
    margin: 0 auto;
}
.annotation-bar .thumb {
    height: 84%;
    margin-top: 12px;
}
.annotation-hbar .thumb {
    width: 88%;
    margin-left: 8px;
}
.status {
    display: flex;
    align-items: center;
    height: 26px;
    flex: none;
    padding: 0 7px;
    background: #e5e5e5;
    border-top: 1px solid #7f7f7f;
}
.status-end {
    justify-content: flex-end;
}

/* figure documents */
.doc-tabs {
    display: flex;
    height: 29px;
    flex: none;
    align-items: center;
    padding: 0 19px 0 4px;
    background: #fff;
    border-bottom: 1px solid #bbb;
}
.doc-tabs a {
    width: 101px;
    height: 28px;
    padding: 3px 10px 0 11px;
    font-size: 15px;
    line-height: 22px;
    color: #666;
    background: #e3e3e3;
    border-top: 3px solid #999;
    border-right: 1px solid #b8b8b8;
}
.doc-tabs a.current {
    width: 91px;
    height: 29px;
    margin-bottom: -1px;
    background: #fff;
}
.doc-tabs .menu {
    margin-left: auto;
}
.grip {
    width: 5px;
    height: 13px;
    margin-right: 3px;
    background: repeating-linear-gradient(#bbb 0 1px, transparent 1px 3px);
}
.figure-area {
    display: grid;
    grid-template: minmax(0, 1fr) 21px / minmax(0, 1fr) 21px;
    flex: 1;
    min-height: 0;
}
.figure-canvas {
    overflow: hidden;
}
#figure, #panner {
    display: block;
    width: 100%;
}
.figure-bar .thumb {
    height: 50%;
    margin-top: 82px;
}
.figure-hbar .thumb {
    width: 96%;
    margin-left: 6px;
}
.plot-bg { fill: #fff; }
.grid { stroke: #dcdcdc; }
.grid-minor { stroke: #b8b8b8; stroke-dasharray: 2 3; }
.axis { fill: none; stroke: #000; }
.estimated, .setpoint { fill: none; stroke-width: 1.5px; }
.estimated { stroke: #0072bd; }
.setpoint { stroke: #d95319; }
.thin { stroke-width: 1px; }
svg text { fill: #222; }
.axes-blue .axis { stroke: #00f; }
.axes-blue text { fill: #2222f0; }
.tick-x, .label, .plot-title, .small { text-anchor: middle; }
.tick-y { text-anchor: end; }
.tick-x, .tick-y { font-size: 17px; }
.label, .plot-title { font-size: 18px; }
.plot-title { font-weight: bold; }
.small { font-size: 13px; }
.axes-tools path {
    fill: none;
    stroke: #777;
    stroke-width: 1.5px;
}
.axes-tools .solid {
    fill: #777;
    stroke: none;
}

/* panner */
.panner-head {
    border-top: 1px solid #7f7f7f;
    height: 30px;
    padding-left: 10px;
}
.mode-strip {
    display: flex;
    height: 24px;
    margin: 0 7px 6px;
    padding-left: 3px;
    border: 1px solid #888;
}
.mode-strip i {
    flex-basis: 0;
    border-right: 1px solid #222;
}
.mode-strip .rest, .mode-strip .outside {
    border: none;
}
.limits {
    display: grid;
    grid-template-columns: 1fr auto 1fr;
    align-items: center;
    padding: 0 6px 6px 9px;
}
.limit {
    display: flex;
    align-items: center;
}
.limit:last-child {
    justify-self: end;
}
.limit input {
    width: 90px;
    height: 28px;
    text-align: center;
}
input[type="text"] {
    font: inherit;
    color: #222;
    background: #fff;
    border: 1px solid #808080;
    border-radius: 0;
}
.reset {
    display: flex;
    align-items: center;
    justify-content: center;
    gap: 7px;
    width: 188px;
    height: 28px;
    background: #f5f5f5;
    border: 1px solid #7f7f7f;
    border-radius: 5px;
    color: #000;
}
.reset svg {
    width: 20px;
    height: 20px;
}

/* details and signals */
.panel-details {
    height: 203px;
}
.details {
    display: grid;
    grid-template-columns: 82px 1fr;
    align-items: center;
    row-gap: 18px;
    line-height: 17px;
}
.details input[type="text"] {
    height: 27px;
    padding: 0 5px;
}
.legend {
    display: flex;
    align-items: center;
    gap: 4px;
    grid-column: span 2;
}
.details > span {
    padding-top: 4px;
}
.panel-signals {
    display: flex;
    flex-direction: column;
    flex: 1;
    min-height: 0;
}
.signals-body {
    display: flex;
    flex-direction: column;
    flex: 1;
    min-height: 0;
    padding-bottom: 14px;
}
.signal-buttons {
    display: flex;
    justify-content: space-between;
    margin-bottom: 13px;
}
.signal-buttons button {
    width: 118px;
    height: 25px;
    color: #000;
    background: #f5f5f5;
    border: 1px solid #7f7f7f;
    border-radius: 5px;
}
.signal-buttons button:disabled {
    color: #aaa;
    border-color: #c4c4c4;
}
.signals-box {
    display: flex;
    flex-direction: column;
    flex: 1;
    background: #fff;
    border: 1px solid #7f7f7f;
    overflow: hidden;
}
.signals {
    width: 100%;
}
.signals th {
    height: 34px;
}
.signals th, .signals td {
    overflow: hidden;
}
.signals .pick {
    width: 26px;
    padding: 0 4px;
}
.signals .name {
    width: 120px;
}
.signals tr > :last-child {
    border-right: none;
}
tr:nth-child(n) td.estimated-color { background: #0072bd; }
tr:nth-child(n) td.setpoint-color { background: #d95319; }
tr:nth-child(n) td.flag { background: #f7d5c6; }
tr:nth-child(n) td.index { background: #f5f5f5; color: #666; }
.pick input {
    display: block;
}
.signals-hbar {
    margin-top: auto;
}
.signals-hbar .thumb {
    width: 86%;
    margin-left: 7px;
}
```
